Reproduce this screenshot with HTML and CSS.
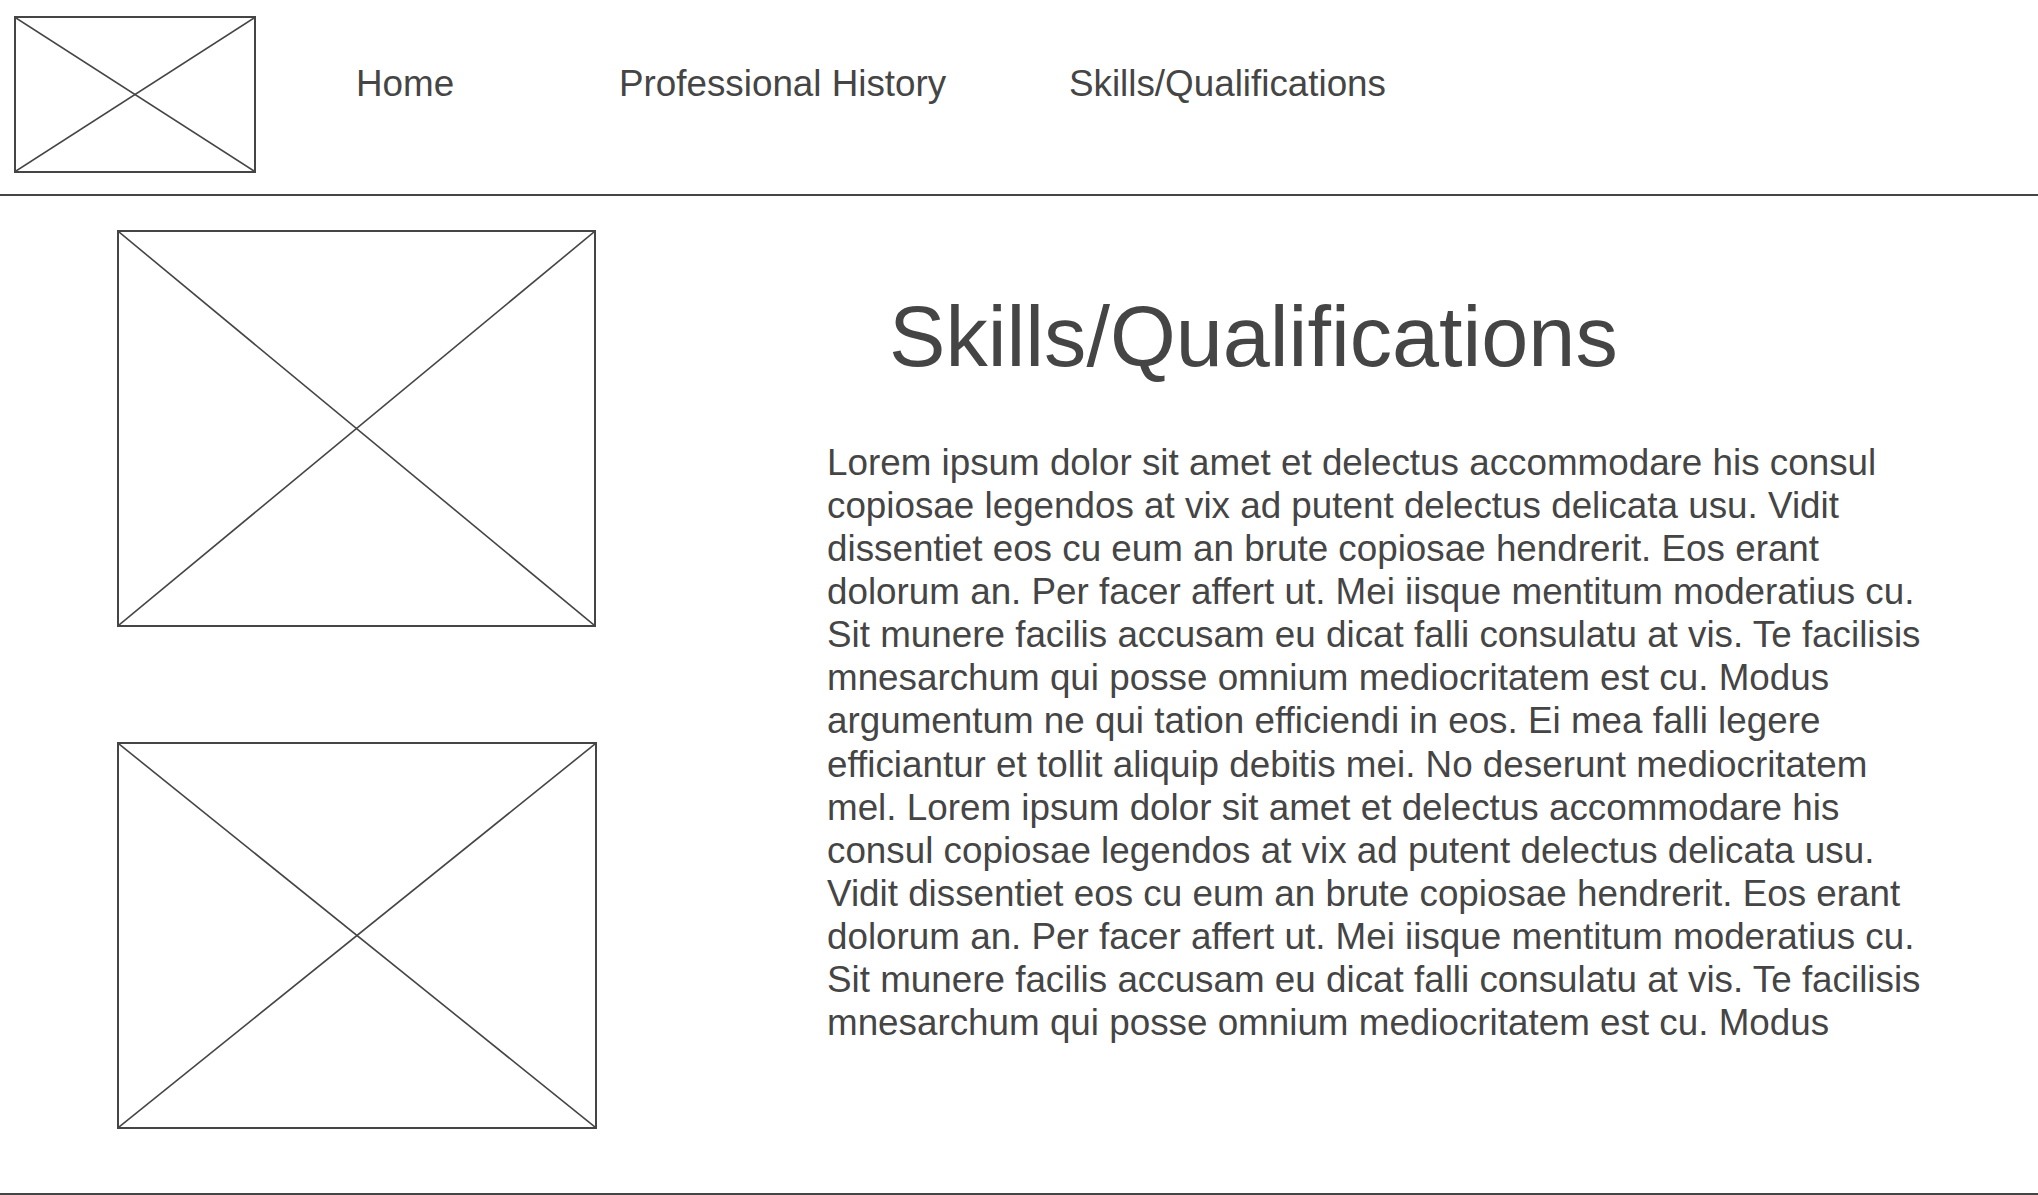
FILE: index.html
```html
<!DOCTYPE html>
<html lang="en">
<head>
<meta charset="utf-8">
<title>Skills/Qualifications</title>
<link rel="stylesheet" href="styles.css">
</head>
<body>
<header class="site-header">
  <div class="logo placeholder">
    <svg class="cross" viewBox="0 0 100 100" preserveAspectRatio="none"><line x1="0" y1="0" x2="100" y2="100"/><line x1="100" y1="0" x2="0" y2="100"/></svg>
  </div>
  <nav class="nav">
    <a class="nav-item" href="#">Home</a>
    <a class="nav-item" href="#">Professional History</a>
    <a class="nav-item" href="#">Skills/Qualifications</a>
  </nav>
</header>
<main class="main">
  <div class="media">
    <div class="placeholder pic-one">
      <svg class="cross" viewBox="0 0 100 100" preserveAspectRatio="none"><line x1="0" y1="0" x2="100" y2="100"/><line x1="100" y1="0" x2="0" y2="100"/></svg>
    </div>
    <div class="placeholder pic-two">
      <svg class="cross" viewBox="0 0 100 100" preserveAspectRatio="none"><line x1="0" y1="0" x2="100" y2="100"/><line x1="100" y1="0" x2="0" y2="100"/></svg>
    </div>
  </div>
  <section class="content">
    <h1 class="title">Skills/Qualifications</h1>
    <p class="body-text">Lorem ipsum dolor sit amet et delectus accommodare his consul copiosae legendos at vix ad putent delectus delicata usu. Vidit dissentiet eos cu eum an brute copiosae hendrerit. Eos erant dolorum an. Per facer affert ut. Mei iisque mentitum moderatius cu. Sit munere facilis accusam eu dicat falli consulatu at vis. Te facilisis mnesarchum qui posse omnium mediocritatem est cu. Modus argumentum ne qui tation efficiendi in eos. Ei mea falli legere efficiantur et tollit aliquip debitis mei. No deserunt mediocritatem mel. Lorem ipsum dolor sit amet et delectus accommodare his consul copiosae legendos at vix ad putent delectus delicata usu. Vidit dissentiet eos cu eum an brute copiosae hendrerit. Eos erant dolorum an. Per facer affert ut. Mei iisque mentitum moderatius cu. Sit munere facilis accusam eu dicat falli consulatu at vis. Te facilisis mnesarchum qui posse omnium mediocritatem est cu. Modus</p>
  </section>
</main>
<footer class="footer"></footer>
</body>
</html>
```

FILE: styles.css
```css
html, body {
  margin: 0;
  padding: 0;
  background: #ffffff;
}

body {
  font-family: "Liberation Sans", Arial, sans-serif;
  color: #454545;
  overflow: hidden;
}

.site-header {
  display: flex;
  align-items: flex-start;
  height: 194px;
  border-bottom: 2px solid #454545;
}

.placeholder {
  position: relative;
  box-sizing: border-box;
  border: 2px solid #454545;
  background: #ffffff;
}

.cross {
  display: block;
  width: 100%;
  height: 100%;
}

.cross line {
  stroke: #454545;
  stroke-width: 1.6;
  vector-effect: non-scaling-stroke;
}

.logo {
  width: 242px;
  height: 157px;
  margin: 16px 0 0 14px;
  flex: none;
}

.nav {
  display: grid;
  grid-template-columns: 263px 450px auto;
  margin-left: 100px;
  padding-top: 63px;
}

.nav-item {
  font-size: 36.8px;
  line-height: normal;
  color: #454545;
  text-decoration: none;
  white-space: nowrap;
}

.main {
  display: flex;
  align-items: flex-start;
  height: 997px;
  padding-left: 117px;
}

.media {
  display: flex;
  flex-direction: column;
  padding-top: 34px;
  width: 480px;
  flex: none;
}

.pic-one {
  width: 479px;
  height: 397px;
}

.pic-two {
  width: 480px;
  height: 387px;
  margin-top: 115px;
}

.content {
  margin-left: 230px;
  padding-top: 92px;
  width: 1106px;
}

.title {
  margin: 0 0 0 62px;
  font-size: 84.6px;
  font-weight: normal;
  line-height: normal;
  white-space: nowrap;
}

.body-text {
  margin: 55px 0 0 0;
  font-size: 36.8px;
  line-height: 43.08px;
}

.footer {
  border-top: 2px solid #454545;
  height: 40px;
}
```
